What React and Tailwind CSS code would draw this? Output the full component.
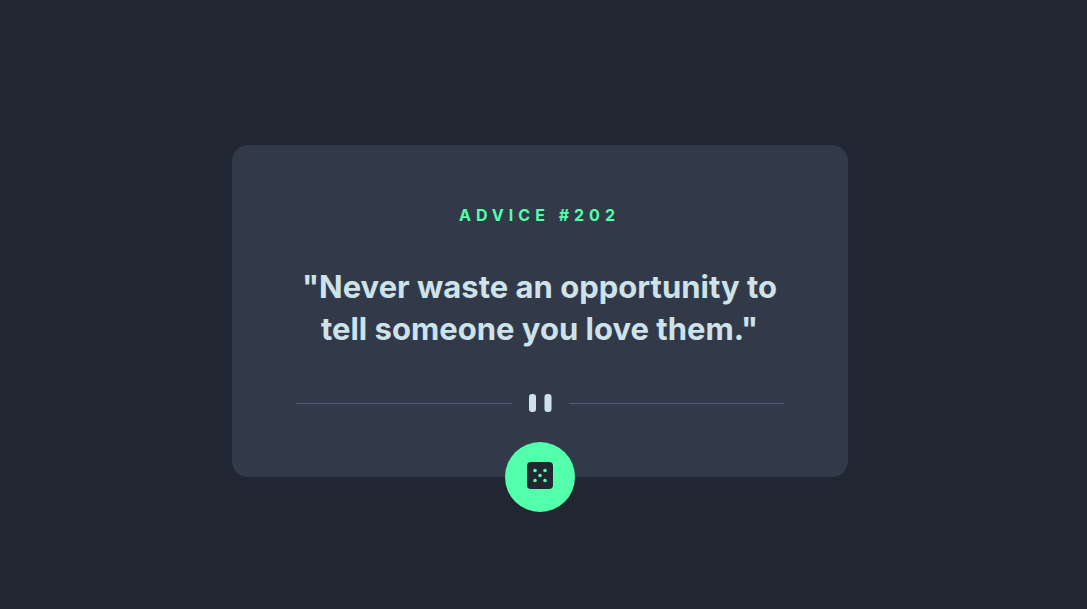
const advice = {
  id: 202,
  text: 'Never waste an opportunity to tell someone you love them.',
};

function Divider() {
  return (
    <svg className="h-auto w-full" viewBox="0 0 488 18" aria-hidden="true">
      <path d="M0 9.5H216M273 9.5H488" stroke="#4f5d74" strokeWidth="1" />
      <rect x="233" y="0" width="7" height="18" rx="3" fill="#cee3e9" />
      <rect x="248.5" y="0" width="7" height="18" rx="3" fill="#cee3e9" />
    </svg>
  );
}

function DiceIcon() {
  const pips = [[8, 8.5], [18, 8.5], [13, 13.5], [8, 18.5], [18, 18.5]];
  return (
    <svg width="26" height="27" viewBox="0 0 26 27" aria-hidden="true">
      <rect width="26" height="27" rx="4" fill="#202733" />
      {pips.map(([x, y]) => (
        <circle key={`${x}-${y}`} cx={x} cy={y} r="1.8" fill="#53ffaa" />
      ))}
    </svg>
  );
}

export default function App() {
  return (
    <main className="flex min-h-screen items-center justify-center bg-[#202733] pt-[13px] pr-2 font-['Inter',sans-serif]">
      <article className="relative flex w-full max-w-[616px] flex-col items-center rounded-2xl bg-[#323a49] px-16 pt-15 pb-[65px] text-center">
        <h1 className="text-base leading-5 font-bold tracking-[5px] text-[#53ffaa]">
          ADVICE #{advice.id}
        </h1>
        <p className="mt-[41px] mb-11 text-[31px] leading-[42px] font-bold text-[#cee3e9]">
          {`"${advice.text}"`}
        </p>
        <Divider />
        <button
          type="button"
          aria-label="Get new advice"
          className="absolute bottom-0 left-1/2 flex size-[70px] -translate-x-1/2 translate-y-1/2 cursor-pointer items-center justify-center rounded-full bg-[#53ffaa] pb-[3px]"
        >
          <DiceIcon />
        </button>
      </article>
    </main>
  );
}
